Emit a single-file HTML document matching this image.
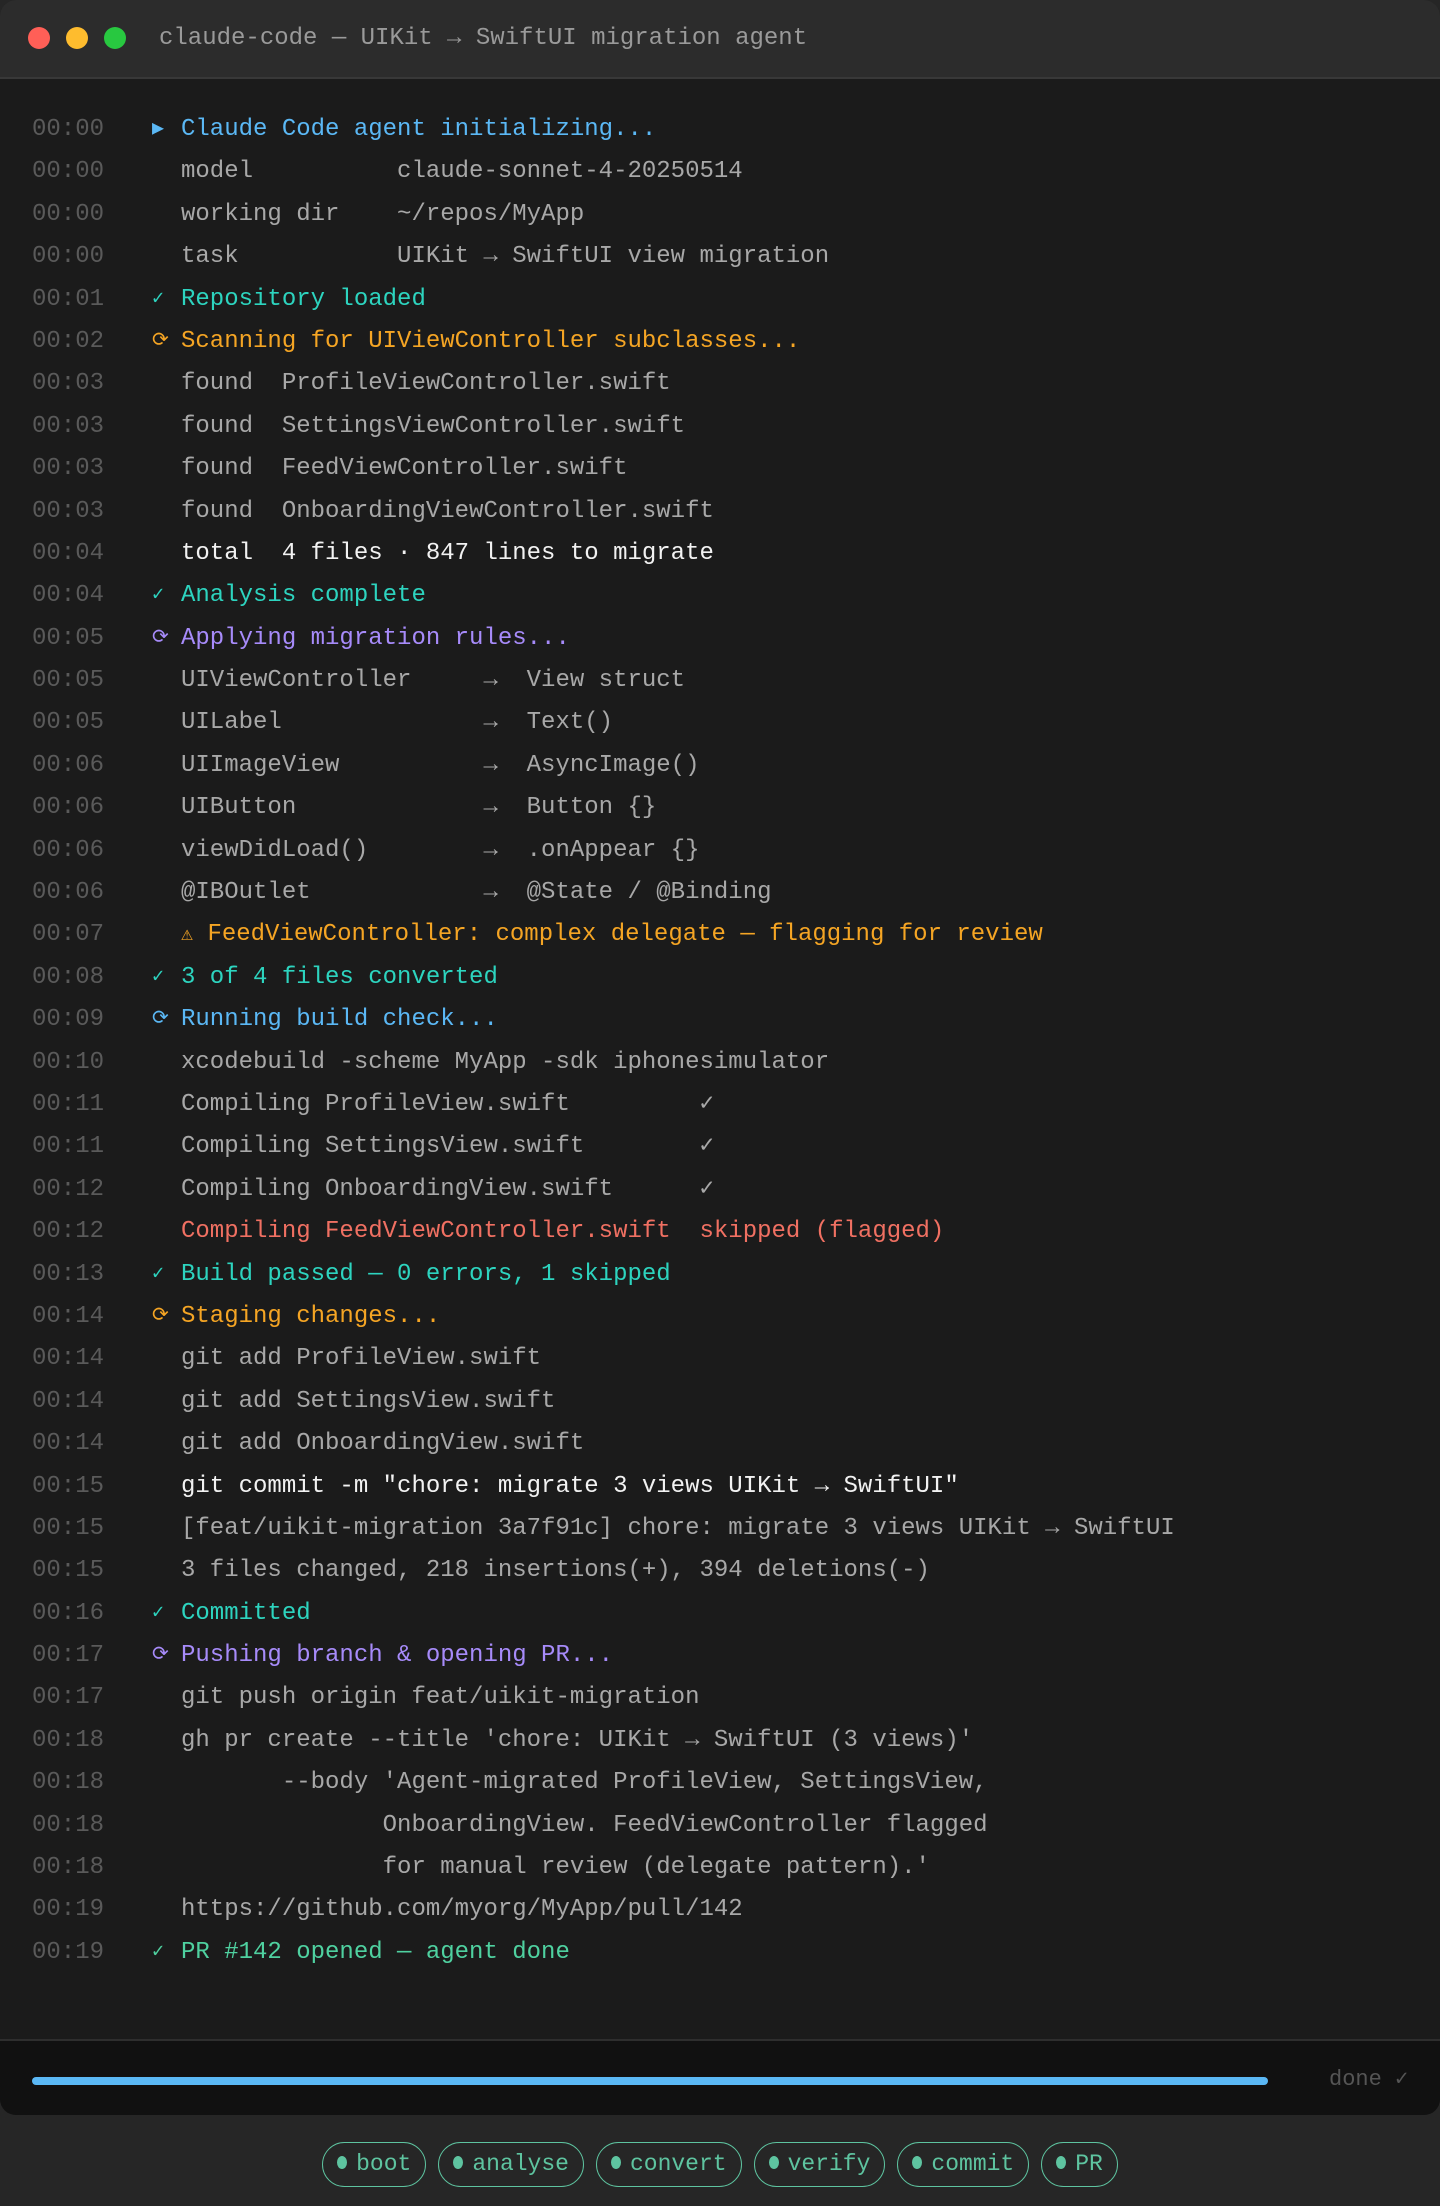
<!DOCTYPE html>
<html><head><meta charset="utf-8"><style>
*{margin:0;padding:0;box-sizing:border-box}
html,body{width:1440px;height:2206px;background:#262626;overflow:hidden}
body{font-family:"Liberation Mono","DejaVu Sans Mono",monospace;font-size:24px}
.win{position:absolute;left:0;top:0;width:1440px;height:2115px;background:#1b1b1b;border-radius:16px;overflow:hidden}
.tb{position:absolute;left:0;top:0;width:1440px;height:79px;background:#2c2c2c;border-bottom:2px solid #383838}
.dot{position:absolute;top:27px;width:22px;height:22px;border-radius:50%}
.title{position:absolute;left:159px;top:23px;color:#9a9a9a;white-space:pre;line-height:32px}
.log{position:absolute;left:0;top:109px;width:1440px}
.l{height:42.4px;line-height:42.4px;white-space:pre;position:relative}
.ts{position:absolute;left:32px;color:#5a5a5a}
.ic{position:absolute;left:152px;font-size:20px}
.tx{position:absolute;left:181px;color:#a8a8a8}
.b{color:#5bb8f5}.t{color:#2dd4bf}.o{color:#f5a524}.p{color:#a78bfa}.w{color:#f2f2f2}.r{color:#f07062}.g{color:#4fd1a0}
.foot{position:absolute;left:0;top:2039px;width:1440px;height:76px;background:#111;border-top:2px solid #2e2e2e}
.bar{position:absolute;left:32px;top:36px;width:1236px;height:8px;border-radius:4px;background:#5bb8f5}
.done{position:absolute;left:1329px;top:22px;color:#555;font-size:22px;line-height:34px}
.pills{position:absolute;top:2142px;left:0;width:1440px;display:flex;justify-content:center;gap:12px}
.pill{height:45px;border:1.5px solid #5ec4a0;border-radius:23px;color:#5ec4a0;padding:0 14px;line-height:42px;font-size:23px;white-space:pre}
.pill:before{content:"";display:inline-block;width:10px;height:13px;border-radius:50%;background:#5ec4a0;margin-right:9px;vertical-align:1px}
</style></head><body>
<div class="win">
<div class="tb">
<div class="dot" style="left:28px;background:#ff5f57"></div>
<div class="dot" style="left:66px;background:#febc2e"></div>
<div class="dot" style="left:104px;background:#28c840"></div>
<div class="title">claude-code — UIKit → SwiftUI migration agent</div>
</div>
<div class="log">
<div class="l"><span class="ts">00:00</span><span class="ic b">▶</span><span class="tx b">Claude Code agent initializing...</span></div>
<div class="l"><span class="ts">00:00</span><span class="tx">model          claude-sonnet-4-20250514</span></div>
<div class="l"><span class="ts">00:00</span><span class="tx">working dir    ~/repos/MyApp</span></div>
<div class="l"><span class="ts">00:00</span><span class="tx">task           UIKit → SwiftUI view migration</span></div>
<div class="l"><span class="ts">00:01</span><span class="ic t">✓</span><span class="tx t">Repository loaded</span></div>
<div class="l"><span class="ts">00:02</span><span class="ic o">⟳</span><span class="tx o">Scanning for UIViewController subclasses...</span></div>
<div class="l"><span class="ts">00:03</span><span class="tx">found  ProfileViewController.swift</span></div>
<div class="l"><span class="ts">00:03</span><span class="tx">found  SettingsViewController.swift</span></div>
<div class="l"><span class="ts">00:03</span><span class="tx">found  FeedViewController.swift</span></div>
<div class="l"><span class="ts">00:03</span><span class="tx">found  OnboardingViewController.swift</span></div>
<div class="l"><span class="ts">00:04</span><span class="tx w">total  4 files · 847 lines to migrate</span></div>
<div class="l"><span class="ts">00:04</span><span class="ic t">✓</span><span class="tx t">Analysis complete</span></div>
<div class="l"><span class="ts">00:05</span><span class="ic p">⟳</span><span class="tx p">Applying migration rules...</span></div>
<div class="l"><span class="ts">00:05</span><span class="tx">UIViewController     →  View struct</span></div>
<div class="l"><span class="ts">00:05</span><span class="tx">UILabel              →  Text()</span></div>
<div class="l"><span class="ts">00:06</span><span class="tx">UIImageView          →  AsyncImage()</span></div>
<div class="l"><span class="ts">00:06</span><span class="tx">UIButton             →  Button {}</span></div>
<div class="l"><span class="ts">00:06</span><span class="tx">viewDidLoad()        →  .onAppear {}</span></div>
<div class="l"><span class="ts">00:06</span><span class="tx">@IBOutlet            →  @State / @Binding</span></div>
<div class="l"><span class="ts">00:07</span><span class="tx o"><span style="font-size:20px">⚠</span> FeedViewController: complex delegate — flagging for review</span></div>
<div class="l"><span class="ts">00:08</span><span class="ic t">✓</span><span class="tx t">3 of 4 files converted</span></div>
<div class="l"><span class="ts">00:09</span><span class="ic b">⟳</span><span class="tx b">Running build check...</span></div>
<div class="l"><span class="ts">00:10</span><span class="tx">xcodebuild -scheme MyApp -sdk iphonesimulator</span></div>
<div class="l"><span class="ts">00:11</span><span class="tx">Compiling ProfileView.swift         ✓</span></div>
<div class="l"><span class="ts">00:11</span><span class="tx">Compiling SettingsView.swift        ✓</span></div>
<div class="l"><span class="ts">00:12</span><span class="tx">Compiling OnboardingView.swift      ✓</span></div>
<div class="l"><span class="ts">00:12</span><span class="tx r">Compiling FeedViewController.swift  skipped (flagged)</span></div>
<div class="l"><span class="ts">00:13</span><span class="ic t">✓</span><span class="tx t">Build passed — 0 errors, 1 skipped</span></div>
<div class="l"><span class="ts">00:14</span><span class="ic o">⟳</span><span class="tx o">Staging changes...</span></div>
<div class="l"><span class="ts">00:14</span><span class="tx">git add ProfileView.swift</span></div>
<div class="l"><span class="ts">00:14</span><span class="tx">git add SettingsView.swift</span></div>
<div class="l"><span class="ts">00:14</span><span class="tx">git add OnboardingView.swift</span></div>
<div class="l"><span class="ts">00:15</span><span class="tx w">git commit -m "chore: migrate 3 views UIKit → SwiftUI"</span></div>
<div class="l"><span class="ts">00:15</span><span class="tx">[feat/uikit-migration 3a7f91c] chore: migrate 3 views UIKit → SwiftUI</span></div>
<div class="l"><span class="ts">00:15</span><span class="tx">3 files changed, 218 insertions(+), 394 deletions(-)</span></div>
<div class="l"><span class="ts">00:16</span><span class="ic t">✓</span><span class="tx t">Committed</span></div>
<div class="l"><span class="ts">00:17</span><span class="ic p">⟳</span><span class="tx p">Pushing branch &amp; opening PR...</span></div>
<div class="l"><span class="ts">00:17</span><span class="tx">git push origin feat/uikit-migration</span></div>
<div class="l"><span class="ts">00:18</span><span class="tx">gh pr create --title 'chore: UIKit → SwiftUI (3 views)'</span></div>
<div class="l"><span class="ts">00:18</span><span class="tx">       --body 'Agent-migrated ProfileView, SettingsView,</span></div>
<div class="l"><span class="ts">00:18</span><span class="tx">              OnboardingView. FeedViewController flagged</span></div>
<div class="l"><span class="ts">00:18</span><span class="tx">              for manual review (delegate pattern).'</span></div>
<div class="l"><span class="ts">00:19</span><span class="tx">https://github.com/myorg/MyApp/pull/142</span></div>
<div class="l"><span class="ts">00:19</span><span class="ic g">✓</span><span class="tx g">PR #142 opened — agent done</span></div>
</div>
<div class="foot"><div class="bar"></div><div class="done">done ✓</div></div>
</div>
<div class="pills">
<div class="pill">boot</div><div class="pill">analyse</div><div class="pill">convert</div><div class="pill">verify</div><div class="pill">commit</div><div class="pill">PR</div>
</div>
</body></html>
